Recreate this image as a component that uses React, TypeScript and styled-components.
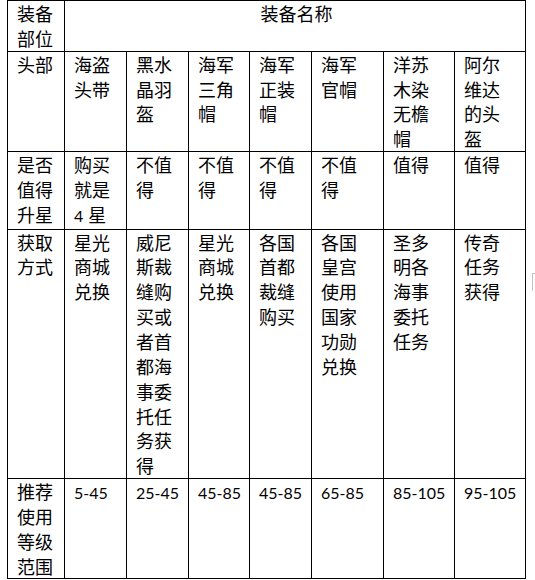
import React from "react";
import styled, { createGlobalStyle } from "styled-components";

const Global = createGlobalStyle`
  html, body { margin: 0; padding: 0; background: #fff; }
  body {
    font-family: "Noto Sans CJK SC", "Noto Sans", sans-serif;
    color: #000;
  }
`;

const Page = styled.div`
  position: relative;
  width: 535px;
  height: 580px;
  overflow: hidden;
  padding-left: 7px;
  box-sizing: border-box;
`;

const Table = styled.table`
  border-collapse: collapse;
  table-layout: fixed;
  width: 519px;
  font-size: 18px;
  line-height: 24.85px;
`;

const Cell = styled.td<{ $center?: boolean }>`
  border: 1px solid #000;
  padding: 0 6px 0 9px;
  vertical-align: top;
  text-align: ${(p) => (p.$center ? "center" : "left")};
  white-space: nowrap;
  font-weight: 400;
`;

const Num = styled.span<{ $gap?: boolean }>`
  font-family: "Lato", "Liberation Sans", sans-serif;
  font-size: 16px;
  margin-right: ${(p) => (p.$gap ? "5px" : "0")};
`;

const Handle = styled.div`
  position: absolute;
  left: 532px;
  top: 273px;
  width: 4px;
  height: 17px;
  border-left: 1px solid #c4c4c4;
  border-top: 1px solid #c4c4c4;
`;

const widths = [57, 62, 62, 61, 62, 72, 71, 71];

type Content = React.ReactNode[];

const Lines: React.FC<{ lines: Content }> = ({ lines }) => (
  <>
    {lines.map((l, i) => (
      <React.Fragment key={i}>
        {i > 0 && <br />}
        {l}
      </React.Fragment>
    ))}
  </>
);

const rows: { head: string[]; cells: Content[] }[] = [
  {
    head: ["头部"],
    cells: [
      ["海盗", "头带"],
      ["黑水", "晶羽", "盔"],
      ["海军", "三角", "帽"],
      ["海军", "正装", "帽"],
      ["海军", "官帽"],
      ["洋苏", "木染", "无檐", "帽"],
      ["阿尔", "维达", "的头", "盔"],
    ],
  },
  {
    head: ["是否", "值得", "升星"],
    cells: [
      [
        "购买",
        "就是",
        <>
          <Num $gap>4</Num>星
        </>,
      ],
      ["不值", "得"],
      ["不值", "得"],
      ["不值", "得"],
      ["不值", "得"],
      ["值得"],
      ["值得"],
    ],
  },
  {
    head: ["获取", "方式"],
    cells: [
      ["星光", "商城", "兑换"],
      ["威尼", "斯裁", "缝购", "买或", "者首", "都海", "事委", "托任", "务获", "得"],
      ["星光", "商城", "兑换"],
      ["各国", "首都", "裁缝", "购买"],
      ["各国", "皇宫", "使用", "国家", "功勋", "兑换"],
      ["圣多", "明各", "海事", "委托", "任务"],
      ["传奇", "任务", "获得"],
    ],
  },
  {
    head: ["推荐", "使用", "等级", "范围"],
    cells: ["5-45", "25-45", "45-85", "45-85", "65-85", "85-105", "95-105"].map(
      (n) => [<Num>{n}</Num>]
    ),
  },
];

export default function App() {
  return (
    <Page>
      <Global />
      <Table>
        <colgroup>
          {widths.map((w, i) => (
            <col key={i} style={{ width: w }} />
          ))}
        </colgroup>
        <tbody>
          <tr>
            <Cell>
              <Lines lines={["装备", "部位"]} />
            </Cell>
            <Cell colSpan={7} $center>
              装备名称
            </Cell>
          </tr>
          {rows.map((r, i) => (
            <tr key={i}>
              <Cell>
                <Lines lines={r.head} />
              </Cell>
              {r.cells.map((c, j) => (
                <Cell key={j}>
                  <Lines lines={c} />
                </Cell>
              ))}
            </tr>
          ))}
        </tbody>
      </Table>
      <Handle />
    </Page>
  );
}
